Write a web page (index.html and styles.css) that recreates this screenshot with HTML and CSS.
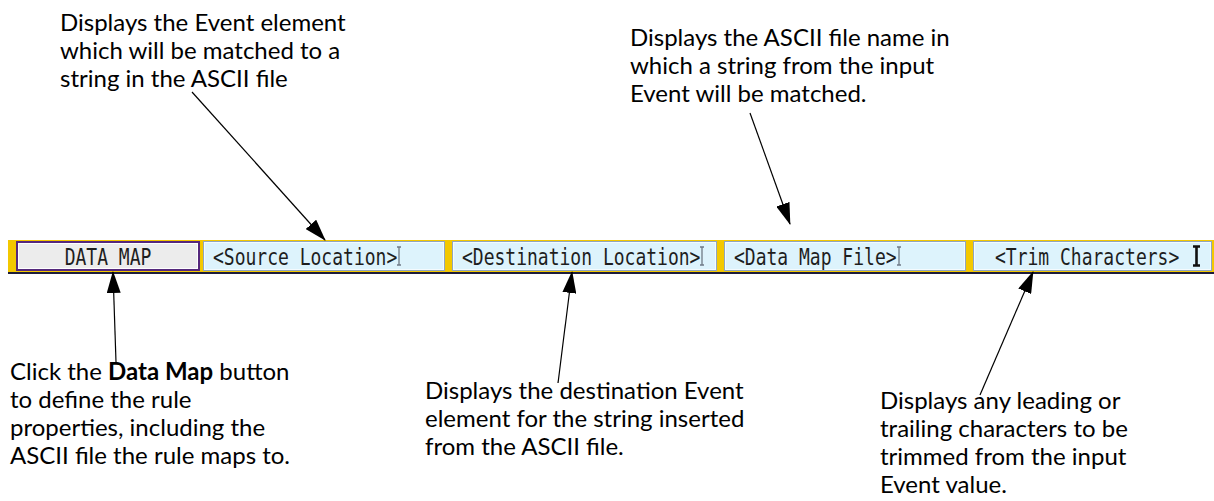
FILE: index.html
```html
<!DOCTYPE html>
<html>
  <head>
    <title>Data Map Rule</title>
    <link rel="stylesheet" href="styles.css">
  </head>
  <body>
    <div class="page">
      <!-- callouts above the bar -->
      <div class="notes notes-top">
        <p class="note note-source">Displays the Event element<br>which will be matched to a<br>string in the ASCII file</p>
        <p class="note note-file">Displays the ASCII file name in<br>which a string from the input<br>Event will be matched.</p>
      </div>

      <div class="bar">
        <div class="btn"><span class="mono">DATA MAP</span></div>
        <div class="field f-source"><span class="mono">&lt;Source Location&gt;</span><svg class="ibeam" width="7" height="20" viewBox="0 0 7 20"><path d="M1 1h2v18H1M5 1H3M5 19H3" fill="none" stroke="#6f7a86" stroke-width="1.3"/></svg></div>
        <div class="field f-dest"><span class="mono">&lt;Destination Location&gt;</span><svg class="ibeam" width="7" height="20" viewBox="0 0 7 20"><path d="M1 1h2v18H1M5 1H3M5 19H3" fill="none" stroke="#6f7a86" stroke-width="1.3"/></svg></div>
        <div class="field f-map"><span class="mono">&lt;Data Map File&gt;</span><svg class="ibeam" width="7" height="20" viewBox="0 0 7 20"><path d="M1 1h2v18H1M5 1H3M5 19H3" fill="none" stroke="#6f7a86" stroke-width="1.3"/></svg></div>
        <div class="field f-trim"><span class="mono">&lt;Trim Characters&gt;</span><svg class="ibeam bold" width="9" height="22" viewBox="0 0 9 22"><path d="M1 1.5h7M1 20.5h7M4.5 1.5v19" fill="none" stroke="#111" stroke-width="2.6"/></svg></div>
      </div>

      <!-- callouts below the bar -->
      <div class="notes notes-bottom">
        <p class="note note-btn">Click the <b>Data Map</b> button<br>to define the rule<br>properties, including the<br>ASCII file the rule maps to.</p>
        <p class="note note-dest">Displays the destination Event<br>element for the string inserted<br>from the ASCII file.</p>
        <p class="note note-trim">Displays any leading or<br>trailing characters to be<br>trimmed from the input<br>Event value.</p>
      </div>

      <svg class="leaders" width="1214" height="501" viewBox="0 0 1214 501">
        <defs>
          <marker id="head" markerWidth="22" markerHeight="14" refX="21" refY="7" orient="auto" markerUnits="userSpaceOnUse">
            <path d="M0 0L22 7L0 14z" fill="#000"/>
          </marker>
        </defs>
        <g stroke="#000" stroke-width="1.2" fill="none">
          <line x1="192" y1="92" x2="325" y2="240" marker-end="url(#head)"/>
          <line x1="750" y1="113" x2="790" y2="224" marker-end="url(#head)"/>
          <line x1="116" y1="362" x2="113" y2="272" marker-end="url(#head)"/>
          <line x1="558" y1="383" x2="572" y2="272" marker-end="url(#head)"/>
          <line x1="980" y1="395" x2="1033" y2="272" marker-end="url(#head)"/>
        </g>
      </svg>
    </div>
  </body>
</html>
```
FILE: styles.css
```css
body {
  margin: 0;
  background: #fff;
  color: #000;
  font-family: Lato, "Open Sans", sans-serif;
}

.page {
  position: relative;
  width: 1214px;
  height: 501px;
  overflow: hidden;
}

.notes {
  display: flex;
  align-items: flex-start;
}

.notes-top {
  height: 240px;
}

.note {
  flex: none;
  margin: 0;
  font-size: 24px;
  line-height: 28px;
  white-space: nowrap;
}

.note b {
  font-weight: 700;
}

.note-source {
  width: 570px;
  margin: 8px 0 0 60px;
}

.note-file {
  margin-top: 23px;
}

.note-btn {
  width: 415px;
  margin: 83px 0 0 10px;
}

.note-dest {
  width: 455px;
  margin-top: 102px;
}

.note-trim {
  margin-top: 112px;
}

/* toolbar strip */
.bar {
  display: flex;
  gap: 7px;
  margin-left: 8px;
  padding: 1px 2px 1px 8px;
  background: #f3c800;
  border-bottom: 2px solid #1c1c3c;
}

.mono {
  display: inline-block;
  font-family: "DejaVu Sans Mono", "Liberation Mono", monospace;
  font-size: 18px;
  color: #1e1e1e;
  transform: scaleY(1.25);
  white-space: pre;
}

.btn {
  width: 184px;
  height: 30px;
  box-sizing: border-box;
  margin-right: -4px;
  border: 2px solid #55287c;
  box-shadow: inset 0 0 0 1px #fff;
  background: #ececec;
  display: flex;
  align-items: center;
  justify-content: center;
}

.field {
  height: 30px;
  box-sizing: border-box;
  border: 1px solid #8fa6bf;
  box-shadow: inset 0 0 0 1px #f4fbfe;
  background: #ddf3fc;
  display: flex;
  align-items: center;
  padding-left: 9px;
}

.f-source { width: 242px; }
.f-dest { width: 265px; }
.f-map { width: 242px; }

.f-trim {
  width: 239px;
  padding-left: 21px;
}

.ibeam {
  margin-left: -1px;
}

.ibeam.bold {
  margin-left: 13px;
}

.leaders {
  position: absolute;
  left: 0;
  top: 0;
  pointer-events: none;
}
```
